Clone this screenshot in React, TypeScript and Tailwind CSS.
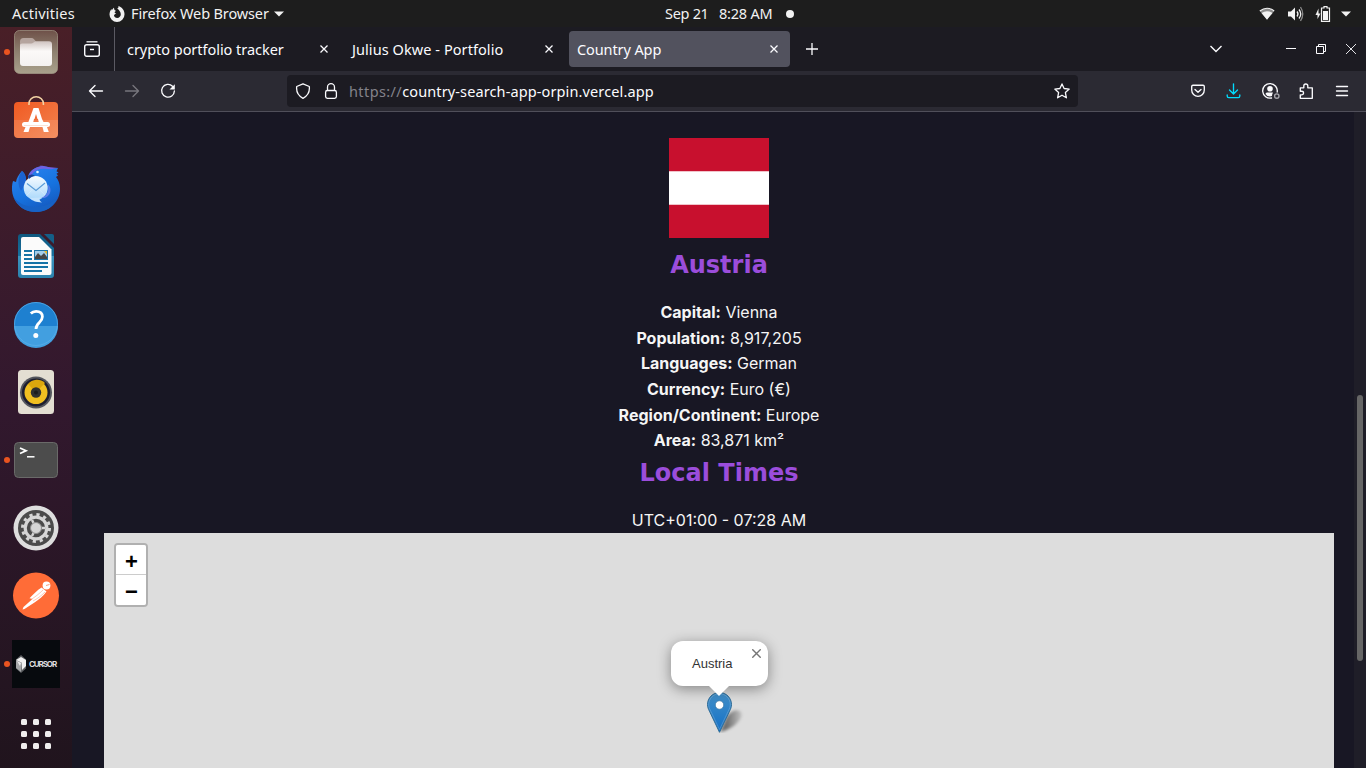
import React from "react";

const UI = "font-['Noto_Sans',sans-serif] whitespace-nowrap";

function FilesIcon() {
  return (
    <svg width="48" height="48" viewBox="0 0 48 48">
      <defs>
        <linearGradient id="files" x1="0" y1="0" x2="0" y2="1">
          <stop offset="0" stopColor="#6f5149" />
          <stop offset="0.5" stopColor="#8e8170" />
          <stop offset="1" stopColor="#a9a18c" />
        </linearGradient>
        <linearGradient id="folder" x1="0" y1="0" x2="0" y2="1">
          <stop offset="0" stopColor="#cfc3c0" />
          <stop offset="0.4" stopColor="#fbf9f8" />
          <stop offset="1" stopColor="#f4f2f1" />
        </linearGradient>
      </defs>
      <rect x="2.5" y="2.5" width="43" height="43" rx="5" fill="url(#files)" stroke="#a39a88" strokeOpacity="0.7" />
      <path d="M8 13.500q0-3.500 3.500-3.500h8q1.500 0 2.500 1.200l2 2.300v5H8z" fill="#b5a49e" />
      <path d="M8 17q0-1.500 2-1.500h9q1.500 0 2.500-1t2.500-1.200h13q3 0 3 3V35q0 3-3 3H11q-3 0-3-3z" fill="url(#folder)" />
    </svg>
  );
}

function SoftwareIcon() {
  return (
    <svg width="48" height="48" viewBox="0 0 48 48">
      <defs>
        <linearGradient id="bag" x1="0" y1="0" x2="1" y2="1">
          <stop offset="0" stopColor="#f05a22" />
          <stop offset="1" stopColor="#f28350" />
        </linearGradient>
      </defs>
      <rect x="2" y="6" width="44" height="36" rx="4" fill="url(#bag)" />
      <path d="M2 24h44v14q0 4-4 4H6q-4 0-4-4z" fill="#fff" fillOpacity="0.1" />
      <path d="M17 9V7.500a7.200 6.700 0 0 1 14.400 0V9" fill="none" stroke="#f3d3a4" strokeWidth="1.600" />
      <path d="M21.500 12h5l3.500 11h-4.500L24 18l-1.500 5h-5z" fill="#fff" />
      <path d="M17.500 23h4.500l-1 4h-5zM26 23h4l2 4h-5z" fill="#fff" />
      <path d="M13.500 31h4.500l-1.500 5h-5zM30.500 31h4.500l1.800 5h-5z" fill="#fff" />
      <rect x="10" y="26" width="28" height="5" rx="2.500" fill="#fff" />
      <path d="M12 29.500h24" stroke="#f8cdb8" strokeWidth="0.600" />
    </svg>
  );
}

function ThunderbirdIcon() {
  return (
    <svg width="48" height="48" viewBox="0 0 48 48">
      <defs>
        <linearGradient id="tb" x1="0.200" y1="0" x2="0.700" y2="1">
          <stop offset="0" stopColor="#2b82f0" />
          <stop offset="0.550" stopColor="#1673df" />
          <stop offset="1" stopColor="#1557bd" />
        </linearGradient>
        <linearGradient id="tbm" x1="0" y1="0" x2="0" y2="1">
          <stop offset="0" stopColor="#f6fbff" />
          <stop offset="1" stopColor="#a9d8fb" />
        </linearGradient>
      </defs>
      <path d="M10 7C7 10 4.500 14 4 18L1 17C-.5 22-.5 28 1.500 33c3.500 9 12.500 15 22.500 15 13 0 24-10 24-23 0-5-1.500-9-4-12l2-1.500-1.500-1.800 2-1.200-2-1.200 1.500-3.300-7 .5C36 2.500 32 2 28 2.500c-6 1-10 4.500-12 9.500v4l-2 2C14.500 14 13 9 10 7z" fill="url(#tb)" />
      <path d="M10 7C6 12 5 20 9 27l5-9C14.500 14 13 9 10 7z" fill="#1b63d0" />
      <path d="M16.500 12C19 5 25 2.500 30 2.500c-5-.5-1-1.500 6 .5l10 1-7 1.200C35 5 31 4 26 5.500c-3 1-5 3-6.500 5.500z" fill="#6f62e2" />
      <path d="M1.500 33c9 13 33 13 43.500 1-4 9-11 14-21 14C13 48 5 42 1.500 33z" fill="#1762c5" />
      <circle cx="23.700" cy="24" r="12" fill="url(#tbm)" />
      <path d="M18 34c2 3 6 4 12 4.500-3-2-3-4-1-5z" fill="#c4e3fd" />
      <path d="M35.500 20c2 6 0 11-6 14 5 .5 9-3 9-8 0-2.500-1-4.500-3-6z" fill="#5a7ee8" />
      <path d="M15 19.500l9 7L33 19" fill="none" stroke="#5a9bd6" strokeWidth="1.100" />
      <path d="M14.500 31.500L21 25M33 31l-6-6" fill="none" stroke="#d3eafb" strokeWidth="0.800" />
      <circle cx="25.500" cy="8" r="1.300" fill="#d9edff" />
      <path d="M16 12c3-2 5-2 7 0-2 0-4 1-6 3z" fill="#1a3f94" />
    </svg>
  );
}

function WriterIcon() {
  return (
    <svg width="48" height="48" viewBox="0 0 48 48">
      <defs>
        <linearGradient id="wr" x1="0" y1="0" x2="0" y2="1">
          <stop offset="0" stopColor="#0f587f" />
          <stop offset="0.500" stopColor="#17719f" />
          <stop offset="0.510" stopColor="#3a94bf" />
          <stop offset="1" stopColor="#2b82ad" />
        </linearGradient>
      </defs>
      <path d="M6 5q0-3 3-3h19l14 14v27q0 3-3 3H9q-3 0-3-3z" fill="url(#wr)" />
      <path d="M9 7q0-2 2-2h16l12.500 12.500V41q0 2-2 2H11q-2 0-2-2z" fill="#fbfbfb" />
      <path d="M32 2h8q2 0 2 2v8z" fill="#145f88" />
      <path d="M12 19h8M12 23h8M12 27h8M12 31h24M12 35h24M12 39h18" stroke="#1673a6" strokeWidth="2" />
      <rect x="22.500" y="18.500" width="13" height="9" fill="#a3cdea" stroke="#1c73a6" />
      <path d="M23 27v-2l3-4 3 3 3-3 3 4v2z" fill="#464646" />
      <path d="M32 19h3v3.500z" fill="#e7bb2e" />
    </svg>
  );
}

function HelpIcon() {
  return (
    <svg width="48" height="48" viewBox="0 0 48 48">
      <circle cx="24" cy="24" r="22" fill="#1e80d0" />
      <path d="M2 26h44a22 22 0 0 1-44 0z" fill="#429fe0" />
      <circle cx="24" cy="24" r="21.500" fill="none" stroke="#5cb1ea" strokeOpacity="0.700" />
      <path d="M18.800 13.500c1.500-1.600 3.300-2.200 5.300-2.200 4 0 6.300 2.200 6.300 5.500 0 5.700-6.400 5.700-6.400 12.200" fill="none" stroke="#fff" strokeWidth="2.800" />
      <circle cx="23.800" cy="35.500" r="2.500" fill="#fff" />
    </svg>
  );
}

function SpeakerIcon() {
  return (
    <svg width="48" height="48" viewBox="0 0 48 48">
      <rect x="6" y="2" width="36" height="44" rx="3.500" fill="#e3ded2" />
      <circle cx="24" cy="24.500" r="16" fill="#54565d" />
      <circle cx="24" cy="24.500" r="14" fill="#1d1e30" />
      <circle cx="24" cy="24.500" r="11.500" fill="#f0bf21" />
      <path d="M24 24.500L16 16a11.500 11.500 0 0 1 17-1z" fill="#dca70d" />
      <circle cx="24" cy="24.500" r="5.200" fill="#30302f" />
      <circle cx="24" cy="24.500" r="2" fill="#1c1c1c" />
    </svg>
  );
}

function TerminalIcon() {
  return (
    <svg width="48" height="48" viewBox="0 0 48 48">
      <rect x="2.500" y="6.500" width="43" height="35" rx="4" fill="#4c4c4c" stroke="#6a6a69" />
      <path d="M8 12l6 2.700L8 17.500" fill="none" stroke="#fff" strokeWidth="1.800" />
      <path d="M15 20.800h7.500" stroke="#fff" strokeWidth="1.500" />
    </svg>
  );
}

function SettingsIcon() {
  return (
    <svg width="48" height="48" viewBox="0 0 48 48">
      <circle cx="24" cy="24" r="22.500" fill="#dedede" />
      <circle cx="24" cy="24" r="18" fill="#4b4b4b" />
      <circle cx="24" cy="24" r="13.500" fill="none" stroke="#d6d6d6" strokeWidth="3" strokeDasharray="3.200 3.870" />
      <circle cx="24" cy="24" r="10.800" fill="none" stroke="#d6d6d6" strokeWidth="3.200" />
      <path d="M24 24l-4-8M24 24l-4 8M24 24h9" stroke="#d6d6d6" strokeWidth="2.500" />
      <circle cx="24" cy="24" r="5.500" fill="#d6d6d6" stroke="#8f8f8f" strokeWidth="1" />
    </svg>
  );
}

function PostmanIcon() {
  return (
    <svg width="48" height="48" viewBox="0 0 48 48">
      <circle cx="24" cy="23.500" r="23" fill="#ff6c37" />
      <circle cx="34.500" cy="13.500" r="3.900" fill="#fff" />
      <path d="M34 13.500l3.500-1" stroke="#ff6c37" strokeWidth="0.700" />
      <path d="M29.500 15.500l5 4c-3 4.500-8 8.500-12 11l-10 6.500-2 .5 1-2.500L20.500 27l-3-.8C21.500 22 25 18.500 29.500 15.500z" fill="#fff" />
      <path d="M31 18c-4 4-8 7-12 9.500M33 20c-4 4-8 7-12 9" fill="none" stroke="#ffa584" strokeWidth="0.600" />
    </svg>
  );
}

function CursorIcon() {
  return (
    <div className="flex h-12 w-12 items-center bg-[#070a0e] pl-[4px]">
      <svg width="10" height="18" viewBox="0 0 10 18">
        <path d="M5 0l5 4.500v9L5 18 0 13.500v-9z" fill="#5c5e61" />
        <path d="M0 5l5-3 5 3v6l-4 4V8z" fill="#f0f0f0" />
        <path d="M0 5l6 3-1 9-5-4z" fill="#a5a7a9" />
        <path d="M1 6l4 2-1 3z" fill="#ececec" />
      </svg>
      <span className="ml-[3px] w-[28px] whitespace-nowrap font-['Inter',sans-serif] text-[8px] leading-none font-bold tracking-[-1.100px] text-[#dededf]">CURSOR</span>
    </div>
  );
}

function AppsIcon() {
  return (
    <div className="grid grid-cols-3 gap-[6px]">
      {Array.from({ length: 9 }, (_, i) => (
        <span key={i} className="h-[6px] w-[6px] rounded-[1.500px] bg-[#f0eeee]" />
      ))}
    </div>
  );
}

function Dock() {
  const items = [
    { el: <FilesIcon />, run: true },
    { el: <SoftwareIcon /> },
    { el: <ThunderbirdIcon /> },
    { el: <WriterIcon /> },
    { el: <HelpIcon /> },
    { el: <SpeakerIcon /> },
    { el: <TerminalIcon />, run: true },
    { el: <SettingsIcon /> },
    { el: <PostmanIcon /> },
    { el: <CursorIcon />, run: true },
  ];
  return (
    <aside className="flex h-[741px] w-[72px] shrink-0 flex-col overflow-hidden bg-linear-to-b from-[#491f27] via-[#32182e] to-[#20141d]">
      <div className="-mt-[9px] flex flex-col">
        {items.map((it, i) => (
          <div key={i} className="flex h-[68px] items-center">
            <span className={it.run ? "ml-1 h-[6px] w-[6px] rounded-full bg-[#e95420]" : "ml-1 h-[6px] w-[6px]"} />
            <div className="ml-[2px]">{it.el}</div>
          </div>
        ))}
        <div className="flex h-[72px] items-center justify-center">
          <AppsIcon />
        </div>
      </div>
    </aside>
  );
}

function TopBar() {
  return (
    <header className={`${UI} flex h-[27px] items-center bg-[#1d1d1d] text-[14.5px] leading-[27px] text-[#f2f2f2]`}>
      <span className="ml-3 w-[97px] tracking-[0.250px]">Activities</span>
      <svg width="16" height="16" viewBox="0 0 16 16">
        <path d="M8.200 2.500C9.500 2 9.800 1 9.300 0 13 1 15.700 4.500 15.500 8.500A7.500 7.500 0 0 1 .5 8.500C.5 6 1.500 4 2.500 3l.3 1.500C3.500 3 4.500 2 5 1.700c0 2 .8 2.800 2.200 3.200-1.200.3-1.700 1-1.500 1.800.5.500 1.300.5 1.600.6-.8.8-2 1-2.300 2 .2 1.700 1.500 2.700 3.200 2.700 2.200 0 3.600-1.700 3.600-3.700 0-2.700-2-4.500-3.600-5.800z" fill="#f2f2f2" />
      </svg>
      <span className="ml-[6px] w-[143px] tracking-[-0.130px]">Firefox Web Browser</span>
      <svg width="10" height="6" viewBox="0 0 10 6"><path d="M0 .5h10L5 5.500z" fill="#f2f2f2" /></svg>
      <span className="ml-[381px] w-[54px] tracking-[-0.300px]">Sep 21</span>
      <span className="w-[67px] tracking-[-0.200px]">8:28 AM</span>
      <span className="h-2 w-2 rounded-full bg-[#f2f2f2]" />
      <div className="ml-auto flex items-center pr-[15px]">
        <svg width="16" height="14" viewBox="0 0 16 14">
          <path d="M.8 4Q8-1.500 15.200 4L8 12.500z" fill="#8d8d8d" />
          <path d="M.8 4Q8-1.500 15.200 4" fill="none" stroke="#f2f2f2" strokeWidth="1.200" />
          <path d="M2.500 6Q8 2.500 13.500 6L8 12.800z" fill="#f2f2f2" />
        </svg>
        <svg className="ml-[13px]" width="16" height="16" viewBox="0 0 16 16">
          <path d="M0 5.500h3L7 1.500v13l-4-4H0z" fill="#f2f2f2" />
          <path d="M9 5.500q2 2.500 0 5M11 3.500q3.500 4.500 0 9" fill="none" stroke="#f2f2f2" strokeWidth="1.300" />
          <path d="M12.500 1q4.500 7 0 14" fill="none" stroke="#8a8a8a" strokeWidth="1.300" />
        </svg>
        <svg className="ml-[11px]" width="16" height="16" viewBox="0 0 16 16">
          <path d="M3.500 2.500v5h2L2.500 13V9H.5z" fill="#f2f2f2" />
          <path d="M9 .700h3V2h2.500v13.300h-8V2H9z" fill="none" stroke="#f2f2f2" strokeWidth="1.200" />
          <rect x="8" y="5" width="5" height="9" fill="#f2f2f2" />
        </svg>
        <svg className="ml-[10px]" width="10" height="6" viewBox="0 0 10 6"><path d="M0 .5h10L5 5.500z" fill="#f2f2f2" /></svg>
      </div>
    </header>
  );
}

function Close() {
  return (
    <svg width="8" height="8" viewBox="0 0 8 8" className="ml-auto mr-3 shrink-0">
      <path d="M.5.500l7 7M7.500.500l-7 7" stroke="#fbfbfe" strokeWidth="1.300" />
    </svg>
  );
}

function Tab({ title, active, cls }: { title: string; active?: boolean; cls: string }) {
  return (
    <div className={`flex h-9 w-[221px] items-center rounded pl-2 ${active ? "bg-[#52525e]" : ""}`}>
      <span className={`pt-[2px] ${cls}`}>{title}</span>
      <Close />
    </div>
  );
}

function TabBar() {
  return (
    <div className={`${UI} flex h-[44px] items-center bg-[#1c1b22] text-[14.5px] text-[#fbfbfe]`}>
      <svg className="ml-[12px]" width="16" height="16" viewBox="0 0 16 16" fill="none" stroke="#fbfbfe" strokeWidth="1.400">
        <path d="M2.500 .8h11" strokeOpacity="0.900" />
        <rect x=".7" y="3.700" width="14.600" height="11.600" rx="2" />
        <path d="M6 8.500h4" />
      </svg>
      <div className="ml-[14px] h-full w-px bg-[#5b5a63]" />
      <div className="ml-1 flex gap-1">
        <Tab title="crypto portfolio tracker" cls="tracking-[-0.040px]" />
        <Tab title="Julius Okwe - Portfolio" cls="tracking-[0.070px]" />
        <Tab title="Country App" active cls="tracking-[-0.100px]" />
      </div>
      <svg className="ml-4" width="12" height="12" viewBox="0 0 12 12"><path d="M6 0v12M0 6h12" stroke="#fbfbfe" strokeWidth="1.300" /></svg>
      <div className="ml-auto flex items-center pr-[10px]">
        <svg className="mr-[64px]" width="12" height="8" viewBox="0 0 12 8"><path d="M.5 1L6 6.500 11.500 1" fill="none" stroke="#fbfbfe" strokeWidth="1.400" /></svg>
        <svg className="mr-5" width="10" height="10" viewBox="0 0 10 10"><path d="M0 4.500h10" stroke="#fbfbfe" /></svg>
        <svg className="mr-5" width="10" height="10" viewBox="0 0 10 10" fill="none" stroke="#fbfbfe"><path d="M.5 2.500h7v7h-7zM2.500 2.500v-2h7v7h-2" /></svg>
        <svg width="10" height="10" viewBox="0 0 10 10"><path d="M0 0l10 10M10 0L0 10" stroke="#fbfbfe" strokeWidth="0.900" /></svg>
      </div>
    </div>
  );
}

function Ico({ children, color = "#fbfbfe" }: { children: React.ReactNode; color?: string }) {
  return (
    <div className="flex h-8 w-9 items-center justify-center">
      <svg width="16" height="16" viewBox="0 0 16 16" fill="none" stroke={color} strokeWidth="1.350" strokeLinejoin="round" strokeLinecap="round" className="overflow-visible">
        {children}
      </svg>
    </div>
  );
}

function Toolbar() {
  return (
    <div className={`${UI} flex h-[41px] items-center border-b border-[#504f5a] bg-[#2b2a33] pl-[6px] pr-[6px] text-[14.5px]`}>
      <Ico><path d="M14.500 8h-13M7 2.500L1.500 8 7 13.500" /></Ico>
      <Ico color="#77767d"><path d="M1.500 8h13M9 2.500L14.500 8 9 13.500" /></Ico>
      <Ico>
        <path d="M12.500 3.200A6.400 6.400 0 1 0 14.400 8" />
        <path d="M14.800 1.200v5.300H9.500z" fill="#fbfbfe" stroke="none" />
      </Ico>
      <div className="ml-[101px] flex h-8 w-[791px] items-center rounded bg-[#1c1b22] pl-2 pr-2">
        <svg width="16" height="16" viewBox="0 0 16 16" fill="none" stroke="#fbfbfe" strokeWidth="1.300" strokeLinejoin="round">
          <path d="M8 .8l6.300 2.700c.6 5-1.500 9.300-6.300 11.800C3.200 12.800 1.100 8.500 1.700 3.500z" />
        </svg>
        <svg className="ml-3" width="16" height="16" viewBox="0 0 16 16" fill="none" stroke="#fbfbfe" strokeWidth="1.300">
          <rect x="2.600" y="7.500" width="10.800" height="7.800" rx="1.800" />
          <path d="M4.500 7.500V4.200a3.500 3.500 0 0 1 7 0v3.300" />
        </svg>
        <span className="ml-[10px] pt-[2px] tracking-[0.120px] text-[#fbfbfe]"><span className="tracking-[0.400px] text-[#83828a]">https://</span>country-search-app-orpin.vercel.app</span>
        <svg className="ml-auto" width="16" height="16" viewBox="0 0 16 16" fill="none" stroke="#fbfbfe" strokeWidth="1.300" strokeLinejoin="round">
          <path d="M8 .9l2.100 4.600 5.100.6-3.800 3.500 1 5.200L8 12.200l-4.400 2.600 1-5.200L.8 6.100l5.100-.6z" />
        </svg>
      </div>
      <div className="ml-auto flex">
        <Ico><path d="M3 2.200h10q1.300 0 1.300 1.300V7a6.300 6.300 0 0 1-12.600 0V3.500Q1.700 2.200 3 2.200zM5 6.500l3 2.800 3-2.800" /></Ico>
        <Ico color="#00ddff"><path d="M7.500 .8v10M3.500 7l4 4 4-4M1.200 12v1q0 1.600 1.600 1.600h9.400q1.600 0 1.600-1.600v-1" /></Ico>
        <Ico>
          <path d="M9.500 15A7.300 7.300 0 1 1 15.200 9" />
          <circle cx="8" cy="5.800" r="2.800" fill="#fbfbfe" stroke="none" />
          <path d="M3.500 11q0-1.500 1.500-1.500h6q-1 1.500-1 3.500l-2 .5Q5 13.500 3.500 11z" fill="#fbfbfe" stroke="none" />
          <circle cx="14.800" cy="13" r="2.200" stroke="#a5a4ab" />
        </Ico>
        <Ico><path d="M2.300 4.800h3.500V3a2 2 0 0 1 4 0v1.800h4.500v10.500h-12v-3.500h1.500a1.800 1.800 0 0 0 0-3.600H2.300z" /></Ico>
        <Ico><path d="M2.500 3.500h11M2.500 8h11M2.500 12.500h11" /></Ico>
      </div>
    </div>
  );
}

function MapPanel() {
  return (
    <div className="relative -mt-[0.5px] h-[400px] bg-[#dddddd]">
      <div className="absolute top-[10px] left-[10px] w-[34px] rounded border-2 border-black/20 bg-clip-padding text-center font-['Liberation_Sans',sans-serif] text-[22px] leading-[30px] font-bold text-black">
        <div className="flex h-[30px] items-center justify-center rounded-t-[2px] border-b border-[#cccccc] bg-white pt-[5px] pl-px">+</div>
        <div className="flex h-[30px] items-center justify-center rounded-b-[2px] bg-white pt-[4px] pl-px">−</div>
      </div>
      <svg className="absolute top-[159px] left-[603px]" width="41" height="41" viewBox="0 0 41 41">
        <defs>
          <linearGradient id="pin" x1="0" y1="0" x2="0" y2="1">
            <stop offset="0" stopColor="#4390c8" />
            <stop offset="1" stopColor="#126fc6" />
          </linearGradient>
          <linearGradient id="shade" x1="0" y1="0" x2="1" y2="0">
            <stop offset="0.300" stopColor="#000" stopOpacity="0.500" />
            <stop offset="1" stopColor="#000" stopOpacity="0.120" />
          </linearGradient>
          <filter id="soft" x="-30%" y="-30%" width="160%" height="160%"><feGaussianBlur stdDeviation="1.800" /></filter>
        </defs>
        <path d="M13 40L20 24Q28 15 34 20 37 25 28 33 20 38.500 13 40z" fill="url(#shade)" filter="url(#soft)" />
        <path d="M12.500.500C5.800.500.500 6 .5 12.600c0 2.300.8 4.400 1.900 6.500L12.500 40.300 22.600 19.100c1.100-2.100 1.900-4.200 1.900-6.500C24.500 6 19.200.500 12.500.500z" fill="url(#pin)" stroke="#2e6c97" />
        <path d="M12.500 1.700c-6 0-10.800 4.900-10.800 10.900 0 2 .7 4 1.800 6l9 18.900 9-18.900c1.100-2 1.800-4 1.800-6 0-6-4.800-10.900-10.800-10.900z" fill="none" stroke="#fff" strokeOpacity="0.180" />
        <circle cx="12.500" cy="13" r="4.200" fill="#fff" stroke="#2e6c97" strokeOpacity="0.600" />
      </svg>
      <div className="absolute top-[108px] left-[567px] h-[45px] w-[97px] rounded-xl bg-white shadow-[0_3px_14px_rgba(0,0,0,0.4)]">
        <div className="pt-[14px] pl-[21px] font-['Liberation_Sans',sans-serif] text-[13px] leading-[17px] text-[#333333]">Austria</div>
        <svg className="absolute top-[8px] left-[81px]" width="9" height="9" viewBox="0 0 9 9"><path d="M.3.300l8.400 8.400M8.700.300L.3 8.700" stroke="#757575" strokeWidth="1.400" /></svg>
        <svg className="absolute top-[44px] left-[37px]" width="22" height="11" viewBox="0 0 22 11"><path d="M0 0h22L11 11z" fill="#fff" /></svg>
      </div>
    </div>
  );
}

const FACTS: [string, string][] = [
  ["Capital:", "Vienna"],
  ["Population:", "8,917,205"],
  ["Languages:", "German"],
  ["Currency:", "Euro (€)"],
  ["Region/Continent:", "Europe"],
  ["Area:", "83,871 km²"],
];

const HEAD = "mb-4 text-center font-['DejaVu_Sans',sans-serif] text-[24px] leading-[38.4px] font-bold text-[#9b4ddb]";

function Page() {
  return (
    <main className="relative h-[656px] overflow-hidden bg-[#181724] px-8 pt-[26px] font-['Inter',sans-serif] text-[16px] leading-[25.6px] text-[#f5f5f5]">
      <svg className="mx-auto block" width="100" height="100" viewBox="0 0 900 900">
        <path fill="#c8102e" d="M0 0h900v900H0z" />
        <path fill="#fff" d="M0 300h900v300H0z" />
      </svg>
      <h2 className={`${HEAD} mt-[7.800px]`}>Austria</h2>
      <div className="text-center">
        {FACTS.map(([k, v]) => (
          <p key={k}><strong className="font-bold">{k}</strong> {v}</p>
        ))}
      </div>
      <h2 className={HEAD}>Local Times</h2>
      <p className="text-center">UTC+01:00 - 07:28 AM</p>
      <MapPanel />
      <div className="absolute top-0 right-0 h-full w-3 bg-[#1f1e28]">
        <div className="mt-[283px] ml-[3px] h-[266px] w-[6px] rounded-full bg-[#666666]" />
      </div>
    </main>
  );
}

export default function App() {
  return (
    <div className="h-[768px] w-[1366px] overflow-hidden">
      <TopBar />
      <div className="flex">
        <Dock />
        <div className="w-[1294px]">
          <TabBar />
          <Toolbar />
          <Page />
        </div>
      </div>
    </div>
  );
}
